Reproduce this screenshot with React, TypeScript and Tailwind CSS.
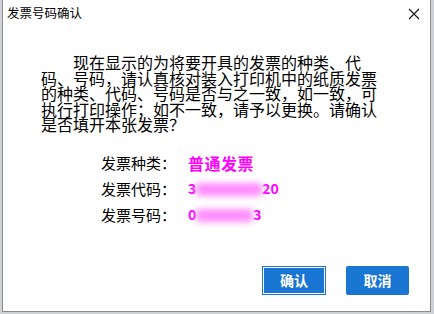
import React from 'react';

const CJK = "font-['Noto_Sans_CJK_SC','Noto_Sans',sans-serif]";

function Redacted({ w }: { w: number }) {
  return (
    <span className="relative inline-block h-[14px] align-middle" style={{ width: w }}>
      <span className="absolute inset-x-0 top-[1px] bottom-0 rounded-sm bg-[#ff8cff] blur-[3px]" />
    </span>
  );
}

function Row({ label, children }: { label: string; children: React.ReactNode }) {
  return (
    <div className="flex h-[26px] items-center">
      <span className="w-[87px] text-[15px] text-black">{label}</span>
      <span className="flex items-center text-[16px] font-bold text-[#ff00ff]">{children}</span>
    </div>
  );
}

export default function App() {
  return (
    <div className={`flex h-[314px] w-[434px] bg-[#cfd2d6] ${CJK}`}>
      <div className="ml-[2px] flex h-[312px] w-[429px] flex-col border-b border-l border-r border-[#8c8c8c] bg-white">
        <div className="flex h-[27px] items-center justify-between pl-[4px] pr-[8px]">
          <span className="text-[12.5px] text-black">发票号码确认</span>
          <svg width="12" height="12" viewBox="0 0 12 12" className="mr-[2px]">
            <path d="M1 1L11 11M11 1L1 11" stroke="#111" strokeWidth="1.1" />
          </svg>
        </div>
        <p className="ml-[38px] mt-[28px] w-[342px] indent-[32px] text-[16px] leading-[15.6px] text-black">
          现在显示的为将要开具的发票的种类、代码、号码，请认真核对装入打印机中的纸质发票的种类、代码、号码是否与之一致，如一致，可执行打印操作；如不一致，请予以更换。请确认是否填开本张发票？
        </p>
        <div className="ml-[98px] mt-[17px] flex flex-col">
          <Row label="发票种类：">
            <span className="tracking-[0.5px]">普通发票</span>
          </Row>
          <Row label="发票代码：">
            <span className="text-[14px]">3</span>
            <Redacted w={66} />
            <span className="text-[14px]">20</span>
          </Row>
          <Row label="发票号码：">
            <span className="text-[14px]">0</span>
            <Redacted w={57} />
            <span className="text-[14px]">3</span>
          </Row>
        </div>
        <div className="mt-auto mb-[16px] flex justify-end gap-[20px] pr-[21px]">
          <button className="h-[29px] w-[64px] border border-[#1976d2] bg-[#1976d2] text-[14px] font-bold text-white outline outline-1 -outline-offset-2 outline-white">
            确认
          </button>
          <button className="h-[29px] w-[63px] rounded-[2px] bg-[#1976d2] text-[14px] font-bold text-white">
            取消
          </button>
        </div>
      </div>
    </div>
  );
}
